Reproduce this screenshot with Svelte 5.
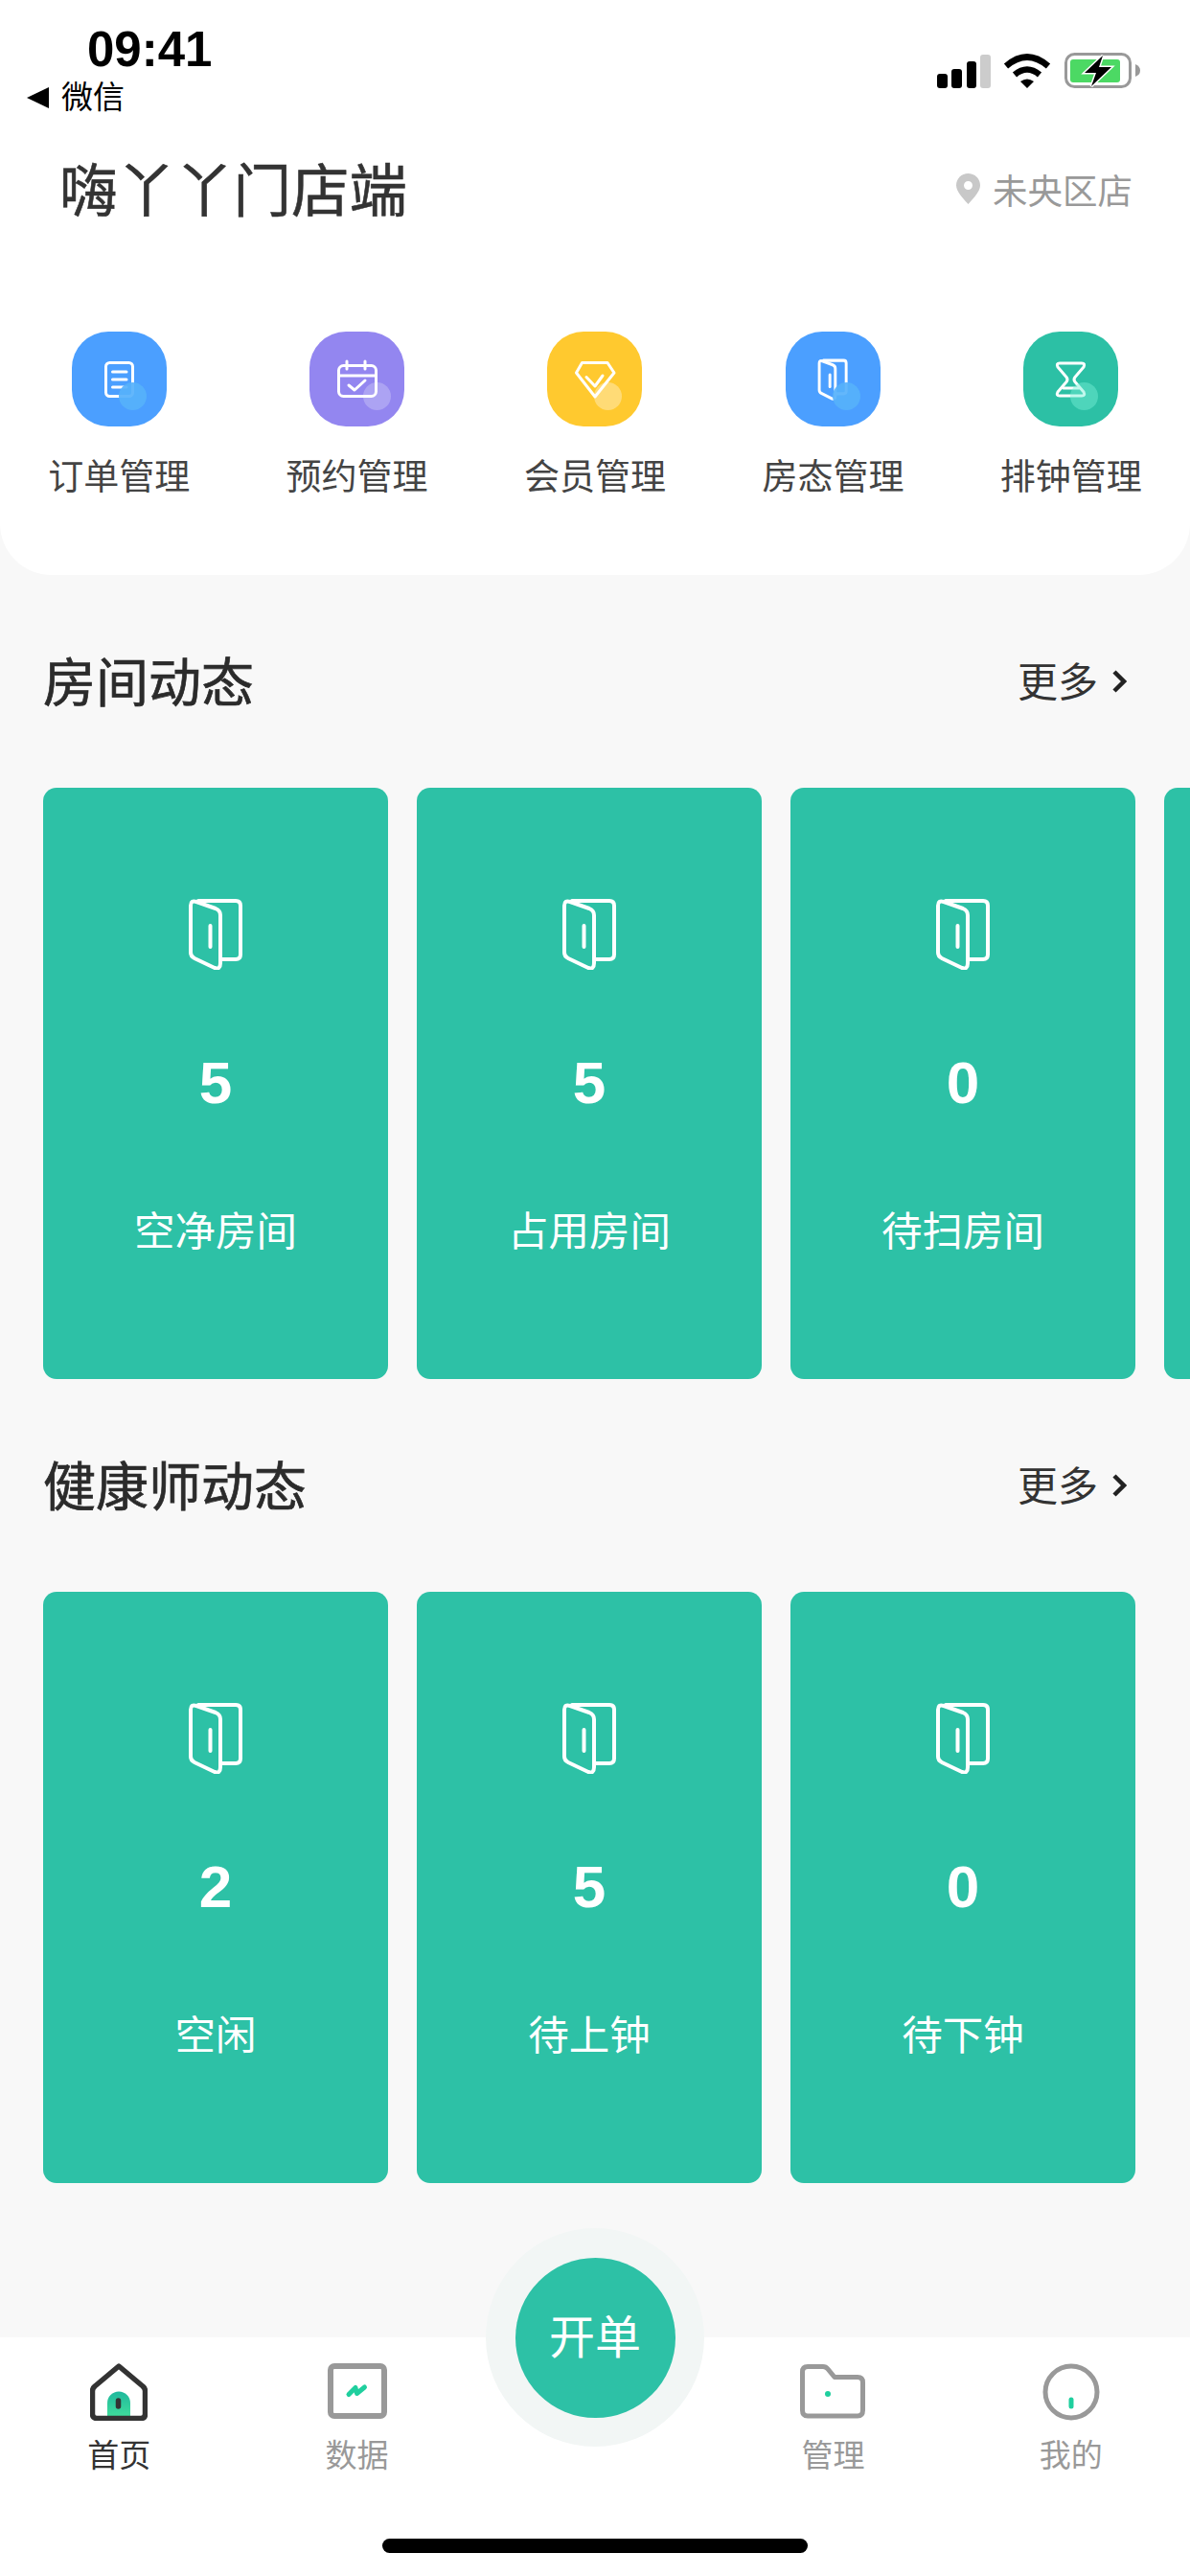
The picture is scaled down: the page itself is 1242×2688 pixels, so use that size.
<script>
  const shortcuts = [
    { label: '订单管理', icon: 'doc', tile: 'blue' },
    { label: '预约管理', icon: 'calendar', tile: 'purple' },
    { label: '会员管理', icon: 'gem', tile: 'yellow' },
    { label: '房态管理', icon: 'door', tile: 'blue' },
    { label: '排钟管理', icon: 'hourglass', tile: 'green' }
  ];

  const sections = [
    {
      title: '房间动态',
      cards: [
        { count: 5, label: '空净房间' },
        { count: 5, label: '占用房间' },
        { count: 0, label: '待扫房间' },
        { count: 0, label: '' }
      ]
    },
    {
      title: '健康师动态',
      cards: [
        { count: 2, label: '空闲' },
        { count: 5, label: '待上钟' },
        { count: 0, label: '待下钟' }
      ]
    }
  ];
</script>

{#snippet doorPaths()}
  <path d="M2 7 Q2 1 8 3 L28 10 Q33 12 33 17 V67 Q33 74 27 72 L6 62 Q2 60 2 56 Z" />
  <path d="M10 2 H49 Q54 2 54 7 V58 Q54 63 49 63 H33" />
  <path d="M22.5 28 V50" />
{/snippet}

<div class="page">
  <header class="head">
    <div class="status">
      <div class="status-left">
        <div class="time">09:41</div>
        <div class="back">
          <svg class="back-arrow" viewBox="0 0 23 22"><polygon points="23,0 23,22 0,11" /></svg>
          <span>微信</span>
        </div>
      </div>
      <div class="status-right">
        <svg class="signal" viewBox="0 0 56 35">
          <rect x="0" y="20" width="11" height="15" rx="3" />
          <rect x="15" y="15" width="11" height="20" rx="3" />
          <rect x="31" y="7" width="10" height="28" rx="3" />
          <rect x="45" y="0" width="11" height="35" rx="3" fill="#cccccc" />
        </svg>
        <svg class="wifi" viewBox="0 0 50 37">
          <path d="M3 14 Q25 -5 47 14" />
          <path d="M12 23 Q25 12 38 23" />
          <path class="wedge" d="M18 30 Q25 25 32 30 L25 37 Z" />
        </svg>
        <svg class="battery" viewBox="0 0 80 37">
          <rect class="shell" x="1.5" y="1.5" width="67" height="34" rx="9" />
          <rect class="level" x="6" y="7" width="52" height="24" rx="3" />
          <polygon class="bolt" points="40,3 21,21 33,21 28,35 49,15 36,15" />
          <path class="tip" d="M74 12 Q79 14 79 18.500 Q79 23 74 25 Z" />
        </svg>
      </div>
    </div>

    <div class="store">
      <h1>嗨丫丫门店端</h1>
      <div class="branch">
        <svg class="pin" viewBox="0 0 25 32">
          <path fill-rule="evenodd" d="M12.500 0 C5.500 0 0 5.500 0 12.300 C0 19 7 26 12.500 32 C18 26 25 19 25 12.300 C25 5.500 19.500 0 12.500 0 Z M12.500 8 A4.500 4.500 0 1 1 12.500 17 A4.500 4.500 0 1 1 12.500 8 Z" />
        </svg>
        <span>未央区店</span>
      </div>
    </div>

    <nav class="shortcuts">
      {#each shortcuts as item}
        <div class="shortcut">
          <div class="tile {item.tile}">
            <svg viewBox="0 0 99 99">
              {#if item.icon === 'doc'}
                <rect x="35.500" y="32.500" width="28" height="35" rx="4" />
                <path d="M42.500 42 H57 M42.500 50 H57 M42.500 58 H57" />
              {:else if item.icon === 'calendar'}
                <rect x="30.500" y="35.500" width="39" height="32" rx="5" />
                <path d="M30.500 46 H69.500 M39 31 V39 M58 31 V39 M41 56 L47 61 L58 51" />
              {:else if item.icon === 'gem'}
                <path d="M36.500 32.500 H63 L70 43 L50 68 L30.500 43 Z" />
                <path d="M41 47.500 L50 57 L58 46" />
              {:else if item.icon === 'door'}
                <g transform="translate(34 29) scale(0.54 0.57)" stroke-width="5.400">
                  {@render doorPaths()}
                </g>
              {:else}
                <path d="M38 33 H61 Q65 33 63 37 L54 47.500 Q52 50 54 52.500 L63 63 Q65 67 61 67 H38 Q34 67 36 63 L45 52.500 Q47 50 45 47.500 L36 37 Q34 33 38 33 Z" />
                <path d="M42 59 H58" />
              {/if}
            </svg>
            <span class="blob"></span>
          </div>
          <span class="shortcut-label">{item.label}</span>
        </div>
      {/each}
    </nav>
  </header>

  <main class="content">
    {#each sections as section}
      <section class="section">
        <div class="section-head">
          <h2>{section.title}</h2>
          <div class="more">
            <span>更多</span>
            <svg class="chevron" viewBox="0 0 16 26"><path d="M3 3 L13 13 L3 23" /></svg>
          </div>
        </div>
        <div class="cards">
          {#each section.cards as card}
            <div class="card">
              {#if card.label}
                <svg class="door" viewBox="0 0 56 74">
                  {@render doorPaths()}
                </svg>
                <div class="count">{card.count}</div>
                <div class="card-label">{card.label}</div>
              {/if}
            </div>
          {/each}
        </div>
      </section>
    {/each}
  </main>

  <footer class="tabbar">
    <div class="tabs">
      <div class="tab active">
        <svg class="tab-icon" viewBox="0 0 60 60">
          <defs>
            <linearGradient id="arch" x1="0" y1="0" x2="0" y2="1">
              <stop offset="0" stop-color="#1fb89d" />
              <stop offset="1" stop-color="#3fdc9c" />
            </linearGradient>
          </defs>
          <path fill="url(#arch)" d="M18 55 V41.500 A12 12 0 0 1 42 41.500 V55 Z" />
          <path class="line dark" d="M30 3 L55 24 Q57.500 26 57.500 29 V53 Q57.500 57.500 53 57.500 H7 Q2.500 57.500 2.500 53 V29 Q2.500 26 5 24 Z" />
          <path class="line dark" d="M29.500 39 V45" />
        </svg>
        <span>首页</span>
      </div>
      <div class="tab">
        <svg class="tab-icon" viewBox="0 0 62 60">
          <rect class="line square" x="3" y="3" width="56" height="52" rx="4" />
          <path class="accent" d="M22 32.500 L29 25.500 L30.500 31.500 L38.500 25" />
        </svg>
        <span>数据</span>
      </div>
      <div class="tab-gap"></div>
      <div class="tab">
        <svg class="tab-icon" viewBox="0 0 68 60">
          <path class="line" d="M8 3.500 H24 Q27 3.500 29 6 L36 14.500 H60 Q65.500 14.500 65.500 20 V49 Q65.500 55 60 55 H8 Q2.500 55 2.500 49 V9 Q2.500 3.500 8 3.500 Z" />
          <circle cx="29" cy="32" r="3" fill="#1fcf9e" />
        </svg>
        <span>管理</span>
      </div>
      <div class="tab">
        <svg class="tab-icon" viewBox="0 0 60 60">
          <circle class="line" cx="30" cy="30" r="27" />
          <path class="accent" d="M30 38 V45" />
        </svg>
        <span>我的</span>
      </div>
    </div>
    <div class="home-bar"></div>

    <div class="fab-ring">
      <div class="fab">开单</div>
    </div>
  </footer>
</div>

<style>
  :global(body) {
    margin: 0;
    background: #f8f8f8;
  }

  .page {
    width: 1242px;
    height: 2688px;
    display: flex;
    flex-direction: column;
    overflow: hidden;
    font-family: "Liberation Sans", "Noto Sans CJK SC", sans-serif;
    color: #333;
  }

  .head {
    height: 600px;
    box-sizing: border-box;
    background: #fff;
    border-radius: 0 0 54px 54px;
  }

  .status {
    height: 157px;
    box-sizing: border-box;
    padding-top: 27px;
    display: flex;
    justify-content: space-between;
  }

  .status-left {
    padding-left: 28px;
  }

  .time {
    margin-left: 63px;
    font-size: 51px;
    line-height: 50px;
    font-weight: 700;
    color: #000;
  }

  .back {
    margin-top: 5px;
    display: flex;
    align-items: center;
    gap: 13px;
    font-size: 33px;
    line-height: 40px;
    color: #000;
  }

  .back-arrow {
    width: 23px;
    height: 22px;
  }

  .status-right {
    padding: 28px 51px 0 0;
    display: flex;
    align-items: flex-start;
  }

  .signal {
    width: 56px;
    height: 35px;
    margin-top: 2px;
  }

  .wifi {
    width: 50px;
    height: 37px;
    margin-left: 13px;
    fill: none;
    stroke: #000;
    stroke-width: 6.500;
  }

  .wifi .wedge {
    fill: #000;
    stroke: none;
  }

  .battery {
    width: 80px;
    height: 37px;
    margin-left: 14px;
  }

  .battery .shell {
    fill: none;
    stroke: #999;
    stroke-width: 3;
  }

  .battery .level {
    fill: #4cd964;
  }

  .battery .bolt {
    fill: #000;
    stroke: #fff;
    stroke-width: 3;
    paint-order: stroke;
  }

  .battery .tip {
    fill: #999;
  }

  .store {
    height: 80px;
    padding: 0 60px 0 62px;
    display: flex;
    align-items: center;
    justify-content: space-between;
  }

  .store h1 {
    margin: 0;
    padding-top: 6px;
    font-size: 60.500px;
    line-height: 80px;
    font-weight: 400;
    color: #333;
    -webkit-text-stroke: 0.6px #333;
  }

  .branch {
    display: flex;
    align-items: center;
    gap: 13px;
    font-size: 36.500px;
    color: #999;
  }

  .pin {
    width: 25px;
    height: 32px;
    fill: #c8c8c8;
  }

  .shortcuts {
    margin-top: 109px;
    display: grid;
    grid-template-columns: repeat(5, 1fr);
  }

  .shortcut {
    display: flex;
    flex-direction: column;
    align-items: center;
    gap: 29px;
  }

  .tile {
    position: relative;
    width: 99px;
    height: 99px;
    border-radius: 38px;
  }

  .tile svg {
    display: block;
    fill: none;
    stroke: #fff;
    stroke-width: 3;
    stroke-linecap: round;
    stroke-linejoin: round;
  }

  .blob {
    position: absolute;
    left: 49px;
    top: 53px;
    width: 29px;
    height: 29px;
    border-radius: 50%;
    background: rgba(255, 255, 255, 0.24);
  }

  .tile.blue {
    background: #4b9fff;
  }

  .tile.blue .blob {
    background: #56b1fb;
    opacity: 0.92;
  }

  .tile.purple {
    background: #9386f0;
  }

  .tile.purple .blob {
    left: 56px;
  }

  .tile.yellow {
    background: #ffc92f;
  }

  .tile.yellow .blob {
    background: rgba(255, 255, 255, 0.34);
  }

  .tile.green {
    background: #2cc0a5;
  }

  .tile.green .blob {
    background: rgba(120, 240, 215, 0.45);
  }

  .shortcut-label {
    font-size: 37px;
    line-height: 50px;
    color: #444;
  }

  .content {
    flex: 1;
    min-height: 0;
    padding-left: 45px;
  }

  .section-head {
    height: 80px;
    margin-top: 71px;
    padding-right: 66px;
    display: flex;
    align-items: center;
    justify-content: space-between;
  }

  .section-head h2 {
    margin: 0;
    padding-bottom: 6px;
    font-size: 55px;
    font-weight: 400;
    color: #2b2b2b;
    -webkit-text-stroke: 0.7px #2b2b2b;
  }

  .more {
    display: flex;
    align-items: center;
    gap: 14px;
    font-size: 42px;
    color: #333;
  }

  .more span {
    padding-bottom: 5px;
  }

  .chevron {
    width: 16px;
    height: 26px;
    fill: none;
    stroke: #222;
    stroke-width: 4.500;
  }

  .cards {
    margin-top: 71px;
    display: flex;
    gap: 30px;
  }

  .card {
    flex: none;
    width: 360px;
    height: 617px;
    box-sizing: border-box;
    padding-top: 116px;
    border-radius: 14px;
    background: #2dc1a6;
    display: flex;
    flex-direction: column;
    align-items: center;
    color: #fff;
  }

  .door {
    width: 56px;
    height: 74px;
    fill: none;
    stroke: #fff;
    stroke-width: 4;
    stroke-linecap: round;
    stroke-linejoin: round;
  }

  .count {
    margin-top: 78px;
    font-size: 62px;
    line-height: 80px;
    font-weight: 700;
  }

  .card-label {
    margin-top: 86px;
    font-size: 42.500px;
    line-height: 60px;
  }

  .tabbar {
    position: relative;
    height: 249px;
    box-sizing: border-box;
    padding-top: 27px;
    background: #fff;
  }

  .tabs {
    display: grid;
    grid-template-columns: repeat(5, 1fr);
  }

  .tab {
    display: flex;
    flex-direction: column;
    align-items: center;
    font-size: 33px;
    line-height: 40px;
    color: #999;
  }

  .tab.active {
    color: #333;
  }

  .tab-icon {
    height: 60px;
    margin-bottom: 17px;
  }

  .line {
    fill: none;
    stroke: #999;
    stroke-width: 5;
    stroke-linejoin: round;
  }

  .line.square {
    stroke-width: 6;
  }

  .line.dark {
    stroke: #333;
    stroke-linecap: round;
    stroke-width: 5.500;
  }

  .accent {
    fill: none;
    stroke: #1fcf9e;
    stroke-width: 5;
    stroke-linecap: round;
    stroke-linejoin: round;
  }

  .home-bar {
    width: 444px;
    height: 15px;
    margin: 66px auto 0;
    border-radius: 8px;
    background: #000;
  }

  .fab-ring {
    position: absolute;
    left: 507px;
    top: -114px;
    width: 228px;
    height: 228px;
    border-radius: 50%;
    background: #f2f6f5;
    display: flex;
    align-items: center;
    justify-content: center;
  }

  .fab {
    width: 167px;
    height: 167px;
    border-radius: 50%;
    background: #2dc1a6;
    color: #fff;
    font-size: 48px;
    line-height: 167px;
    text-align: center;
  }
</style>
